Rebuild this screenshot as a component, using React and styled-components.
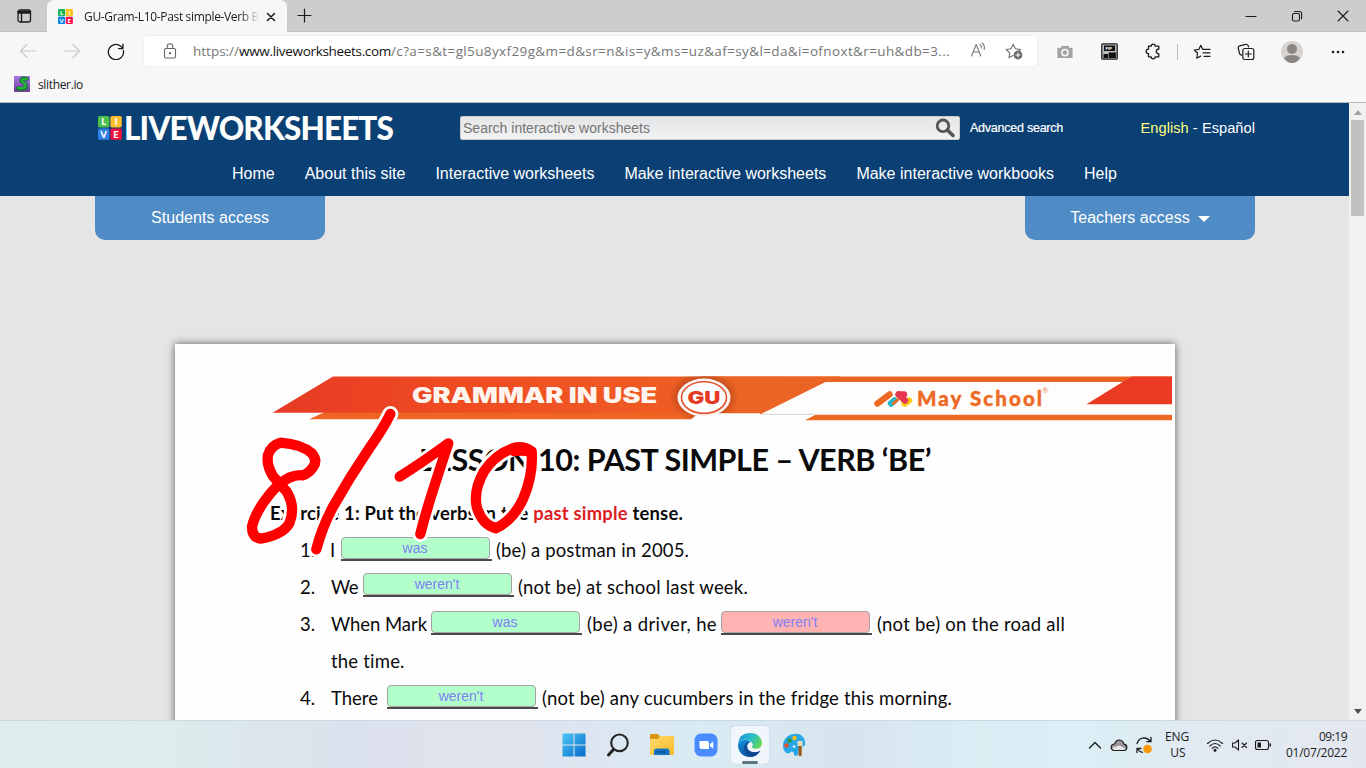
import React, { useLayoutEffect, useRef } from "react";
import styled, { createGlobalStyle } from "styled-components";

const GlobalStyle = createGlobalStyle`
  * { box-sizing: border-box; }
  html, body, #root { margin: 0; height: 768px; overflow: hidden; }
  body { font-family: "Liberation Sans", Arial, sans-serif; }
`;

/* ---------- text that fills a given measure ---------- */
const Measure = styled.span`
  display: block;
  flex: none;
  width: ${(p) => p.$w}px;
  margin-left: ${(p) => p.$ml || 0}px;
  white-space: pre;
`;

function Fit({ w, ml, children, className }) {
  const ref = useRef(null);
  useLayoutEffect(() => {
    const el = ref.current;
    el.style.letterSpacing = "0px";
    const n = el.textContent.length;
    el.style.letterSpacing = `${(w - el.getBoundingClientRect().width) / n}px`;
  }, [w]);
  return (
    <Measure $w={w} $ml={ml} className={className}>
      <span ref={ref}>{children}</span>
    </Measure>
  );
}

const Screen = styled.div`
  width: 1366px;
  height: 768px;
  display: flex;
  flex-direction: column;
  overflow: hidden;
  background: #e5e5e5;
`;

/* ---------- browser chrome ---------- */
const TitleBar = styled.div`
  height: 32px;
  flex: none;
  display: flex;
  background: #cdcdcd;
  border-bottom: 1px solid #bfbfbf;
  font-family: "Open Sans", sans-serif;
`;
const TabActions = styled.div`
  width: 47px;
  display: flex;
  align-items: center;
  justify-content: center;
`;
const Tab = styled.div`
  width: 240px;
  height: 33px;
  padding: 0 9px 0 11px;
  display: flex;
  align-items: center;
  background: #f7f7f7;
  border-radius: 7px 7px 0 0;
`;
const TabTitle = styled.div`
  width: 175px;
  margin-left: 11px;
  overflow: hidden;
  font-size: 12px;
  color: #1b1b1b;
  mask-image: linear-gradient(90deg, #000 155px, transparent 176px);
`;
const WindowButtons = styled.div`
  margin-left: auto;
  display: flex;
  gap: 34px;
  align-items: center;
  padding-right: 17px;
`;
const NewTab = styled.div`
  display: flex;
  align-items: center;
  margin-left: 10px;
`;
const ToolBar = styled.div`
  height: 39px;
  flex: none;
  display: flex;
  align-items: center;
  background: #f7f7f7;
  font-family: "Open Sans", sans-serif;
`;
const NavIcons = styled.div`
  width: 144px;
  padding-left: 19px;
  display: flex;
  gap: 26px;
`;
const Address = styled.div`
  width: 893px;
  height: 30px;
  margin-top: -1px;
  padding: 0 14px 0 18px;
  display: flex;
  align-items: center;
  background: #fff;
  border-radius: 4px;
  box-shadow: 0 0 3px rgba(0, 0, 0, 0.08);
  font-size: 13.5px;
  color: #767676;
`;
const Domain = styled(Fit)`
  color: #111;
`;
const AddressActions = styled.div`
  margin-left: auto;
  display: flex;
  gap: 18px;
`;
const ToolIcons = styled.div`
  flex: 1;
  height: 30px;
  display: flex;
  align-items: center;
  padding-left: 6px;
`;
const Tool = styled.div`
  width: ${(p) => p.$w || 44}px;
  flex: none;
  display: flex;
  justify-content: center;
`;
const Divider = styled.i`
  width: 1px;
  height: 16px;
  margin: 0 2px;
  background: #bdbdbd;
`;
const Favorites = styled.div`
  height: 32px;
  flex: none;
  display: flex;
  align-items: center;
  padding: 0 0 5px 14px;
  gap: 8px;
  background: #f7f7f7;
  border-bottom: 1px solid #bababa;
  font: 12px "Open Sans", sans-serif;
  color: #1b1b1b;
`;

/* ---------- site ---------- */
const Viewport = styled.div`
  height: 617px;
  flex: none;
  display: flex;
`;
const Site = styled.div`
  width: 1349px;
  overflow: hidden;
`;
const Header = styled.header`
  height: 93px;
  background: #0b4074;
  color: #fff;
`;
const HeaderTop = styled.div`
  height: 50px;
  display: flex;
  align-items: center;
  padding-left: 98px;
`;
const Wordmark = styled(Fit)`
  font: 900 31.5px/32px "Lato", sans-serif;
  color: #fff;
`;
const SearchBox = styled.div`
  width: 500px;
  height: 24px;
  margin-left: 67px;
  padding: 0 4px 0 2px;
  display: flex;
  align-items: center;
  justify-content: space-between;
  border: 1px solid #ccc;
  border-radius: 2px;
  background: linear-gradient(#e4e5e6, #f1f2f4);
  color: #757575;
  font-size: 14px;
`;
const Small = styled(Fit)`
  font-size: 12.5px;
  -webkit-text-stroke: 0.2px #fff;
`;
const Languages = styled(Fit)`
  font-size: 14.6px;
  em { font-style: normal; color: #ffff80; }
`;
const Menu = styled.nav`
  display: flex;
  gap: 30px;
  padding: 12px 0 0 232px;
  font-size: 16px;
  line-height: 18px;
`;
const AccessRow = styled.div`
  display: flex;
  justify-content: space-between;
  width: 1160px;
  height: 148px;
  margin-left: 95px;
`;
const AccessTab = styled.div`
  width: 230px;
  height: 44px;
  display: flex;
  align-items: center;
  justify-content: center;
  gap: 8px;
  border-radius: 0 0 10px 10px;
  background: #4f8bc4;
  color: #fff;
  font-size: 16px;
`;
const Caret = styled.i`
  margin-top: 2px;
  border: 6px solid transparent;
  border-top-color: #fff;
  border-bottom: 0;
`;
const ScrollBar = styled.div`
  width: 17px;
  display: flex;
  flex-direction: column;
  align-items: center;
  padding: 7px 0 6px;
  background: #f1f1f1;
`;
const Thumb = styled.div`
  width: 13px;
  height: 96px;
  margin: 5px 0 auto;
  background: #c1c1c1;
`;

/* ---------- worksheet ---------- */
const Paper = styled.main`
  position: relative;
  width: 1000px;
  height: 420px;
  margin-left: 175px;
  padding-top: 32px;
  background: #fefefe;
  box-shadow: 0 0 8px rgba(0, 0, 0, 0.6);
  font-family: "Lato", sans-serif;
  color: #0a0a0a;
`;
const Banner = styled.svg`
  display: block;
  margin-left: 97px;
`;
const Title = styled(Fit)`
  font-size: 30.5px;
  font-weight: 700;
  line-height: 44px;
  margin-top: 13px;
`;
const Exercise = styled(Fit)`
  font-size: 18.4px;
  font-weight: 700;
  line-height: 37px;
  margin-top: 14px;
  margin-bottom: -1px;
  em { font-style: normal; color: #df1c22; }
`;
const Line = styled.div`
  display: flex;
  height: 37px;
  padding-left: 125px;
  font-size: 18.5px;
  line-height: 38px;
`;
const Blank = styled.div`
  width: 151px;
  flex: none;
  height: ${(p) => p.$h}px;
  margin: ${(p) => p.$top}px 0 0 ${(p) => p.$ml}px;
  border-bottom: 2px solid #4a4a4a;
`;
const Answer = styled.div`
  width: 149px;
  height: 22px;
  padding-right: 1px;
  border: 1px solid #a3a3a3;
  border-radius: 4px;
  background: ${(p) => (p.$wrong ? "#ffb3b3" : "#b3ffcc")};
  color: #7f7ff2;
  font: 14px/20px "Liberation Sans", Arial, sans-serif;
  text-align: center;
`;
const Score = styled.svg`
  position: absolute;
  left: 55px;
  top: 16px;
  z-index: 2;
`;

/* ---------- task bar ---------- */
const TaskBar = styled.footer`
  height: 48px;
  flex: none;
  display: flex;
  align-items: center;
  border-top: 1px solid #cbd9e2;
  background: linear-gradient(90deg, #dfeeec 0, #dcebec 180px, #dce2ed 340px, #dfe3ee 520px, #d9ebf3 700px, #d8e4ef 850px, #daeef4 980px, #daf0f6 1070px, #e1e9f1 1200px, #e3e7f0 1366px);
  font: 12px/16px "Open Sans", sans-serif;
  color: #1c1c1c;
`;
const Apps = styled.div`
  display: flex;
  align-items: center;
  gap: 6px;
  margin-left: 555px;
`;
const AppButton = styled.div`
  position: relative;
  width: 38px;
  height: 38px;
  display: flex;
  align-items: center;
  justify-content: center;
  border-radius: 4px;
  background: ${(p) => (p.$active ? "#f0f6fb" : "none")};
  box-shadow: ${(p) => (p.$active ? "0 0 1px rgba(0,0,0,.25)" : "none")};
`;
const Indicator = styled.i`
  position: absolute;
  bottom: 0;
  width: 16px;
  height: 3px;
  border-radius: 2px;
  background: #5c7686;
`;
const Tray = styled.div`
  display: flex;
  align-items: center;
  margin-left: auto;
  padding-right: 19px;
`;
const TrayIcons = styled.div`
  display: flex;
  align-items: center;
  gap: ${(p) => p.$gap}px;
`;
const Language = styled.div`
  width: 26px;
  margin: 0 15px 0 12px;
  text-align: center;
`;
const Clock = styled.div`
  width: 61px;
  margin-left: 14px;
  display: flex;
  flex-direction: column;
  align-items: flex-end;
`;

const Icon = ({ w = 16, h, children, ...rest }) => (
  <svg width={w} height={h || w} viewBox={`0 0 ${w} ${h || w}`} fill="none" stroke="#1b1b1b" strokeWidth="1.1" strokeLinecap="round" strokeLinejoin="round" {...rest}>
    {children}
  </svg>
);

const LiveLogo = ({ size, colors }) => (
  <svg width={size} height={size} viewBox="0 0 24 24" fontFamily="Lato" fontWeight="900" fontSize="9.5" fill="#fff" textAnchor="middle">
    {["L", "I", "V", "E"].map((c, i) => {
      const x = (i % 2) * 12.4;
      const y = Math.floor(i / 2) * 12.4;
      return (
        <g key={c}>
          <rect x={x} y={y} width="11.4" height="11.4" rx="1.6" fill={colors[i]} />
          <text x={x + 5.7} y={y + 9.2}>{c}</text>
        </g>
      );
    })}
  </svg>
);

const TabClose = styled(Icon)`
  flex: none;
  margin-left: 7px;
`;

const Chrome = () => (
  <>
    <TitleBar>
      <TabActions>
        <Icon w={16}><rect x="2" y="2" width="12.5" height="12" rx="2" strokeWidth="1.3" /><path d="M2 3.5h12.5M2.500 5h12M5.500 5v9" strokeWidth="1.4" /></Icon>
      </TabActions>
      <Tab>
        <LiveLogo size={15} colors={["#14b455", "#fcbf16", "#0b84ee", "#f5104b"]} />
        <TabTitle><Fit w={175}>GU-Gram-L10-Past simple-Verb B</Fit></TabTitle>
        <TabClose w={10}><path d="M1.5 1.5l7 7M8.5 1.5l-7 7" strokeWidth="1.5" /></TabClose>
      </Tab>
      <NewTab><Icon w={15}><path d="M7.5 1v13M1 7.5h13" strokeWidth="1.2" /></Icon></NewTab>
      <WindowButtons>
        <Icon w={12}><path d="M1 6.5h10" /></Icon>
        <Icon w={12}><rect x="1.5" y="3.5" width="7" height="7.5" rx="1.5" /><path d="M3.5 1.5H8.5Q10.6 1.5 10.6 3.6V8.8" /></Icon>
        <Icon w={12}><path d="M1 1l10 10M11 1L1 11" /></Icon>
      </WindowButtons>
    </TitleBar>
    <ToolBar>
      <NavIcons>
        <Icon w={18} h={16} stroke="#c9c9c9"><path d="M16.5 8H1.5M8 1.5L1.5 8 8 14.5" /></Icon>
        <Icon w={18} h={16} stroke="#c9c9c9"><path d="M1.5 8h15M10 1.5L16.5 8 10 14.5" /></Icon>
        <Icon w={18} h={17} strokeWidth="1.3"><path d="M16.4 7.6A7.6 7.6 0 1 1 13.8 3.2L16 5.4M16 1.2V5.6H11.6" /></Icon>
      </NavIcons>
      <Address>
        <Icon w={16} stroke="#666"><rect x="2.5" y="5.5" width="11" height="9.5" rx="1.5" /><path d="M5.2 5.3V3.6a2.8 2.8 0 0 1 5.6 0v1.7" /><circle cx="8" cy="10.2" r=".6" fill="#666" /></Icon>
        <Fit w={46} ml={15}>https://</Fit>
        <Domain w={152}>www.liveworksheets.com</Domain>
        <Fit w={559}>/c?a=s&t=gl5u8yxf29g&m=d&sr=n&is=y&ms=uz&af=sy&l=da&i=ofnoxt&r=uh&db=3...</Fit>
        <AddressActions>
          <Icon w={17} h={16} stroke="#777"><path d="M1.5 14L6.2 2.5 10.8 14M3.2 10h6M10 2.2q1.8 1.8 1.3 4M12.2 1q3 2.8 1.9 6.5" /></Icon>
          <Icon w={18} stroke="#707070"><path d="M8 13.4L4 15.7 4.8 10.9 1.2 7.5 6 6.8 8.2 2.2 10.4 6.8 15.5 7.5 14.4 8.6" /><circle cx="13" cy="13" r="4.4" fill="#686868" stroke="none" /><path d="M13 11v4M11 13h4" stroke="#fff" /></Icon>
        </AddressActions>
      </Address>
      <ToolIcons>
        <Tool><Icon w={18} stroke="none"><path d="M2 4.8h3.2V3h7.6v1.8H16a.6.6 0 0 1 .6.6v9a.6.6 0 0 1-.6.6H2a.6.6 0 0 1-.6-.6v-9A.6.6 0 0 1 2 4.8Z" fill="#a3a3a3" /><circle cx="9" cy="9.6" r="3.1" stroke="#f7f7f7" strokeWidth="1.6" /></Icon></Tool>
        <Tool><Icon w={17}><rect x=".8" y=".8" width="15.4" height="15.4" rx="1" fill="#bdbdbd" stroke="#222" strokeWidth="1.3" /><path d="M3 2.500h11v5.500H3zM2.500 11h4.500v4h-4.500zM7.600 9.500h7.300V15H7.600z" fill="#111" stroke="none" /><text x="4.600" y="6.700" fontSize="4" fill="#fff" stroke="none" fontFamily="Inter" fontWeight="700">PIP</text></Icon></Tool>
        <Tool><Icon w={17} strokeWidth="1.3"><path d="M3.500 3.200H6.200Q6.200 1.200 8.200 1.200T10.200 3.200H13.800V6Q11.300 6.400 11.300 8.400T13.800 10.800V13.800H10.200Q10.200 15.800 8.200 15.800T6.200 13.800H3.500V10.600Q1.200 10.600 1.200 8.500T3.500 6.200Z" /></Icon></Tool>
        <Divider />
        <Tool><Icon w={18} h={16} strokeWidth="1.2"><path d="M10.500 5.300H9.600L7.800 1.300 5.800 5.400 1.300 6 4.600 9.200 3.800 14.200 7.600 12.100M11 5.300H17M10 8.800H17M11 12.300H17" /></Icon></Tool>
        <Tool><Icon w={18} strokeWidth="1.2"><path d="M4.6 12.2Q2.8 11.8 2.4 10L1.2 5Q1 3.3 2.7 2.8L8.8 1.3Q10.5 1 11.2 2.8L11.6 4" /><rect x="5.8" y="5.5" width="11" height="11" rx="2" /><path d="M11.3 8v6M8.3 11h6" /></Icon></Tool>
        <Tool $w={47}><Icon w={22} stroke="none"><circle cx="11" cy="11" r="11" fill="#d5d2cf" /><circle cx="11" cy="8" r="5" fill="#8b8682" /><path d="M3 17Q5 14 11 14T19 17Q16 22 11 22T3 17Z" fill="#8b8682" /></Icon></Tool>
        <Tool $w={46}><Icon w={16} stroke="none"><g fill="#1b1b1b"><circle cx="3" cy="8" r="1.3" /><circle cx="8" cy="8" r="1.3" /><circle cx="13" cy="8" r="1.3" /></g></Icon></Tool>
      </ToolIcons>
    </ToolBar>
    <Favorites>
      <Icon w={16}>
        <defs><linearGradient id="sl" x2="0" y2="1"><stop stopColor="#a678e8" /><stop offset="1" stopColor="#6c3f96" /></linearGradient></defs>
        <rect width="16" height="16" stroke="none" fill="url(#sl)" />
        <path d="M12.800 3Q8.500 1.500 7.200 4.300L11.500 8.500Q13 13 8.500 12.500H4" stroke="#0f7a22" strokeWidth="3.800" />
        <path d="M12.500 3Q8.500 2 7.500 4.300L11.200 8.500Q12.500 12.300 8.500 12H4" stroke="#25b83a" strokeWidth="2" />
      </Icon>
      <Fit w={45}>slither.io</Fit>
    </Favorites>
  </>
);

const MENU = [["Home", 42.7], ["About this site", 100.7], ["Interactive worksheets", 159], ["Make interactive worksheets", 202], ["Make interactive workbooks", 197.6], ["Help", 33]];

const SiteHeader = () => (
  <>
    <Header>
      <HeaderTop>
        <LiveLogo size={24} colors={["#4cc04c", "#fcbe2c", "#2f80e8", "#f5103c"]} />
        <Wordmark w={269} ml={2}>LIVEWORKSHEETS</Wordmark>
        <SearchBox>
          <Fit w={187}>Search interactive worksheets</Fit>
          <Icon w={20} stroke="#555"><circle cx="8" cy="7.8" r="5.8" strokeWidth="2.8" /><path d="M12.5 12.3L18 17.5" strokeWidth="3.6" /></Icon>
        </SearchBox>
        <Small w={93} ml={10}>Advanced search</Small>
        <Languages w={114.5} ml={77.5}><em>English</em> - Español</Languages>
      </HeaderTop>
      <Menu>{MENU.map(([t, w]) => <Fit key={t} w={w}>{t}</Fit>)}</Menu>
    </Header>
    <AccessRow>
      <AccessTab><Fit w={118}>Students access</Fit></AccessTab>
      <AccessTab><Fit w={119.5}>Teachers access</Fit><Caret /></AccessTab>
    </AccessRow>
  </>
);

const WorksheetBanner = () => (
  <Banner width="901" height="48" viewBox="272 376 901 48">
    <defs>
      <linearGradient id="bn"><stop stopColor="#e63a25" /><stop offset=".3" stopColor="#ef4a22" /><stop offset="1" stopColor="#ee6a24" /></linearGradient>
      <radialGradient id="gs"><stop offset=".6" stopColor="#7a2410" stopOpacity=".7" /><stop offset="1" stopColor="#7a2410" stopOpacity="0" /></radialGradient>
    </defs>
    <path d="M325 412H700L691 419.300H309Z" fill="#ee6423" />
    <path d="M333 376.600H840V412.700H272.500Z" fill="url(#bn)" />
    <path d="M700 376.600H1172V382H825L764 414H690Z" fill="#ec6424" />
    <ellipse cx="704" cy="397" rx="35" ry="26" fill="url(#gs)" opacity=".65" />
    <path d="M699 413.300H760V424H686Z" fill="#fefefe" />
    <path d="M825.500 382H1125L1086 405H1172V414.500H760Z" fill="#fffdfb" />
    <path d="M760 414.300H815" stroke="#c9c9c9" strokeWidth=".8" />
    <path d="M815.500 414.800H1172V420.300H805Z" fill="#ee6a24" />
    <path d="M1131.600 376.600H1172V404.300H1086.500Z" fill="#ea3a22" />
    <ellipse cx="704" cy="397.600" rx="26.500" ry="19" fill="#fbf4f1" />
    <ellipse cx="704" cy="397.600" rx="22.500" ry="15.800" fill="#fff" stroke="#e6502c" strokeWidth="1.600" />
    <text x="687.500" y="403.900" fontFamily="Inter" fontWeight="900" fontSize="17.500" textLength="33" lengthAdjust="spacingAndGlyphs" fill="#e63a25">GU</text>
    <text x="412" y="402.600" fontFamily="Inter" fontWeight="900" fontSize="21" textLength="245" lengthAdjust="spacingAndGlyphs" fill="#fff5ee">GRAMMAR IN USE</text>
    <g strokeWidth="6.400" strokeLinecap="round">
      <path d="M891 403.500L894.500 400.500" stroke="#27b7c4" />
      <path d="M904.500 403.500L909 400.500" stroke="#f8cb12" />
      <path d="M898.500 394.500L905 400.500" stroke="#e7364f" />
      <path d="M899 394.500L904 394.500" stroke="#e7364f" />
      <path d="M893.500 403.500L898 399.500" stroke="#ee6a24" strokeWidth="3" />
      <path d="M877.500 403.500L889.500 394.500" stroke="#ee6a24" />
    </g>
    <text x="917" y="405.800" fontFamily="Lato" fontWeight="900" fontSize="20.500" textLength="125" fill="#ee6a24" stroke="#ee6a24" strokeWidth=".4" lengthAdjust="spacing">May School</text>
    <text x="1042" y="393" fontFamily="Lato" fontSize="8" fill="#ee8a54">®</text>
  </Banner>
);

const STROKES = [
  "M218 346Q238 340 250 320Q263 302 246 280Q215 253 152 248Q122 256 114 285Q108 315 130 350L170 395Q198 440 178 490Q158 524 92 536Q66 532 66 500Q73 468 100 428Q140 370 180 352Q200 344 218 346",
  "M481 162Q460 205 420 262Q360 350 308 442Q275 505 259 568",
  "M509 350Q580 305 655 250Q643 285 613 378Q588 455 571 522",
  "M905 274Q885 259 860 262Q800 277 762 334Q730 390 740 440Q755 493 797 505Q850 480 880 415Q910 345 905 274",
];

const HandwrittenScore = () => (
  <Score width="340" height="210" viewBox="0 0 1020 630" fill="none" strokeLinecap="round" strokeLinejoin="round">
    {STROKES.map((d) => <path key={d} d={d} stroke="#fff" strokeWidth="48" />)}
    {STROKES.map((d) => <path key={d} d={d} stroke="#fe0000" strokeWidth="31" />)}
    <path d="M820 268Q870 250 912 268L908 290Q890 280 850 285Z" fill="#fe0000" stroke="#fe0000" strokeWidth="8" />
  </Score>
);

const Gap = ({ ml, top = 6, h = 24, wrong, children }) => (
  <Blank $ml={ml} $top={top} $h={h}><Answer $wrong={wrong}>{children}</Answer></Blank>
);

const Worksheet = () => (
  <Paper>
    <WorksheetBanner />
    <Title w={512} ml={244}>LESSON 10: PAST SIMPLE – VERB ‘BE’</Title>
    <Exercise w={413} ml={95}>Exercise 1: Put the verbs in the <em>past simple</em> tense.</Exercise>
    <Line><Fit w={15}>1.</Fit><Fit w={5} ml={15}>I</Fit><Gap ml={6}>was</Gap><Fit w={193} ml={4}>(be) a postman in 2005.</Fit></Line>
    <Line><Fit w={15}>2.</Fit><Fit w={27} ml={16}>We</Fit><Gap ml={5} top={5}>weren't</Gap><Fit w={230} ml={4}>(not be) at school last week.</Fit></Line>
    <Line><Fit w={15}>3.</Fit><Fit w={96} ml={16}>When Mark</Fit><Gap ml={4}>was</Gap><Fit w={130} ml={5}>(be) a driver, he</Fit><Gap ml={4} wrong>weren't</Gap><Fit w={188} ml={5}>(not be) on the road all</Fit></Line>
    <Line><Fit w={74} ml={31}>the time.</Fit></Line>
    <Line><Fit w={15}>4.</Fit><Fit w={47} ml={16}>There</Fit><Gap ml={9}>weren't</Gap><Fit w={410} ml={4}>(not be) any cucumbers in the fridge this morning.</Fit></Line>
    <HandwrittenScore />
  </Paper>
);

const Taskbar = () => (
  <TaskBar>
    <Apps>
      <AppButton>
        <svg width="24" height="24"><defs><linearGradient id="w" x2="1" y2="1"><stop stopColor="#4cc8f6" /><stop offset="1" stopColor="#0569c9" /></linearGradient></defs><path d="M.5.5h11v11H.5zM12.500.5h11v11h-11zM.5 12.500h11v11H.5zM12.500 12.500h11v11h-11z" fill="url(#w)" /></svg>
      </AppButton>
      <AppButton><Icon w={24}><circle cx="13.500" cy="9.800" r="8.300" stroke="#2a2a2a" strokeWidth="2.200" /><path d="M7.500 16.500L2.500 22" stroke="#222" strokeWidth="3" /></Icon></AppButton>
      <AppButton>
        <svg width="26" height="24"><defs><linearGradient id="f" x2="1" y2="1"><stop stopColor="#ffdb6e" /><stop offset="1" stopColor="#fbb928" /></linearGradient></defs><path d="M1 2Q1 1 2 1H9L11 3.500 9 7H1Z" fill="#d9970f" /><path d="M1 6H9L11.500 3H24Q25 3 25 4V21Q25 22 24 22H1Z" fill="url(#f)" /><path d="M5 22V18Q5 15.500 7.500 15.500H18.500Q20.500 15.500 20.500 18V22Z" fill="#1474c4" /><path d="M8.500 19h8.500" stroke="#0a4f92" strokeWidth="1.500" /></svg>
      </AppButton>
      <AppButton>
        <svg width="24" height="24"><rect x=".5" y=".5" width="23" height="23" rx="6.500" fill="#4a8cff" /><path d="M5.500 8H13Q15 8 15 10V16H7.500Q5.500 16 5.500 14ZM16 11L19.300 8.500V15.700L16 13.300Z" fill="#fff" /></svg>
      </AppButton>
      <AppButton $active>
        <svg width="26" height="26" viewBox="0 0 24 24">
          <defs><linearGradient id="e1" y1=".2" y2=".6"><stop stopColor="#1595d8" /><stop offset=".55" stopColor="#2bc0c8" /><stop offset="1" stopColor="#62d850" /></linearGradient><linearGradient id="e2" x2=".6" y2="1"><stop stopColor="#1593df" /><stop offset="1" stopColor="#0c4d9c" /></linearGradient></defs>
          <path d="M1 11Q2 1 12 1C19 1 23 5.500 23 10.500Q22.500 15 18 15.500Q13.500 15.500 13.800 13.700Q15.500 12 13.500 9.500Q11 7 7 7Q3 7.500 1 11Z" fill="url(#e1)" />
          <path d="M1 11Q3 7 8 7.200Q11 7.500 12.800 9.500Q9.800 9.500 9.300 13Q9.500 18.500 16 18.800Q19 18.800 21.500 17.200Q18.500 23 12 23C5 23 .5 17.500 1 11Z" fill="url(#e2)" />
          <path d="M6.500 14Q7 9.300 12.500 9.200Q9.500 10 9.300 13Q9.500 18.500 16 18.800Q19 18.800 21.500 17.200Q19 22 13.500 22.800Q6.500 21 6.500 14Z" fill="#0d438c" opacity=".75" />
        </svg>
        <Indicator />
      </AppButton>
      <AppButton>
        <svg width="24" height="24"><path d="M12 1C19 0 24 5 23 12C22 14 19 13 17 14L16 22Q14 23.500 12 22Q12 18 9.500 18.500Q7 21 5 20.500Q1 18 1 13C1 6 6 1.500 12 1Z" fill="#27a7e8" /><circle cx="12.500" cy="5" r="2.200" fill="#fbc216" /><circle cx="7.500" cy="7.500" r="2.200" fill="#249a3a" /><circle cx="4.500" cy="12.500" r="2.300" fill="#e2512c" /><circle cx="12" cy="13.500" r="1.300" fill="#e8f6fd" /><path d="M15.500 8h5v5h-5z" fill="#f2d9b4" /><path d="M16.500 13h3.200v9q-1.500 2.500-3.200 0z" fill="#9a5a1c" /></svg>
      </AppButton>
    </Apps>
    <Tray>
      <TrayIcons $gap={7.5}>
        <Icon w={14}><path d="M1.500 10L7 4.500 12.500 10" strokeWidth="1.300" /></Icon>
        <Icon w={18} h={14}><path d="M4.500 12.500Q1 12 1.200 9T4.500 6Q6 1.800 9.500 2T14 6.200Q17 6.800 16.800 9.500T14 12.500Z" fill="#999" strokeWidth="1.200" /><path d="M2 10L9 7.500 15.500 10.500 14 12H4Z" fill="#e8e8e8" stroke="none" /></Icon>
        <Icon w={18}><path d="M2 7.500Q4 1.800 9 1.800Q13 2 15.500 5.500M16 1.500V5.700H11.800M2 16.500V12.500H6M2.500 13Q4.500 16 7.500 16.300" strokeWidth="1.300" /><circle cx="12.500" cy="13" r="4.300" fill="#fb9606" stroke="none" /></Icon>
      </TrayIcons>
      <Language><Fit w={24}>ENG</Fit>US</Language>
      <TrayIcons $gap={6.5}>
        <Icon w={18} h={14}><path d="M1.500 5.500Q9-1.500 16.500 5.500M3.800 8Q9 3 14.200 8M6 10.300Q9 7.500 12 10.300" /><circle cx="9" cy="12.300" r="1" fill="#1b1b1b" /></Icon>
        <Icon w={17} h={14}><path d="M1.500 5H4L7.500 1.800V12.200L4 9H1.500ZM11 5l4.500 4.500M15.500 5L11 9.500" /></Icon>
        <Icon w={18} h={14}><rect x="1.500" y="2.500" width="13" height="9" rx="2" /><path d="M16.300 6v2" strokeWidth="1.500" /><path d="M3.500 4.500H7V9.500H3.500Z" fill="#1b1b1b" stroke="none" /></Icon>
      </TrayIcons>
      <Clock><Fit w={28}>09:19</Fit><Fit w={61}>01/07/2022</Fit></Clock>
    </Tray>
  </TaskBar>
);

export default function App() {
  return (
    <Screen>
      <GlobalStyle />
      <Chrome />
      <Viewport>
        <Site>
          <SiteHeader />
          <Worksheet />
        </Site>
        <ScrollBar>
          <Icon w={8} h={5} stroke="none"><path d="M0 5L4 0 8 5Z" fill="#a3a3a3" /></Icon>
          <Thumb />
          <Icon w={8} h={5} stroke="none"><path d="M0 0L4 5 8 0Z" fill="#505050" /></Icon>
        </ScrollBar>
      </Viewport>
      <Taskbar />
    </Screen>
  );
}
